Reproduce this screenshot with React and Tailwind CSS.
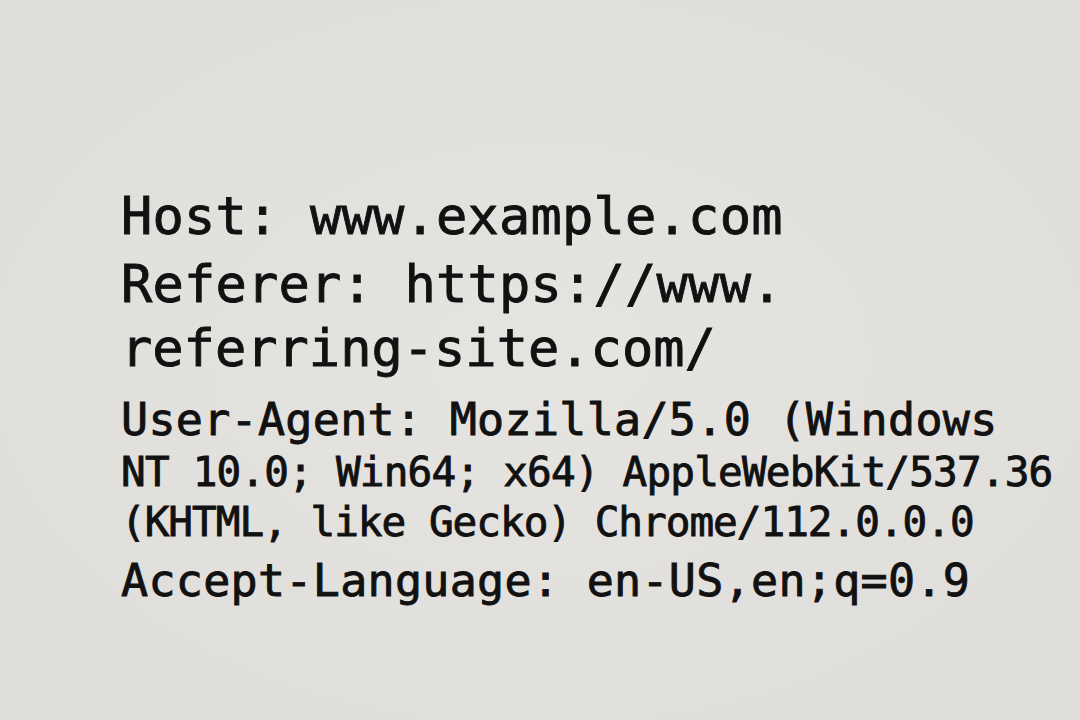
// HTTP request headers printed on paper
const LINES = [
  { text: 'Host: www.example.com', cls: 'text-[52px] tracking-[0.2px]' },
  { text: 'Referer: https://www.', cls: 'mt-[16px] text-[52px] tracking-[0.2px]' },
  { text: 'referring-site.com/', cls: 'mt-[12px] text-[52px]' },
  { text: 'User-Agent: Mozilla/5.0 (Windows', cls: 'mt-[23px] text-[45px] tracking-[0.3px]' },
  { text: 'NT 10.0; Win64; x64) AppleWebKit/537.36', cls: 'mt-[10px] text-[41px] tracking-[-0.8px]' },
  { text: '(KHTML, like Gecko) Chrome/112.0.0.0', cls: 'mt-[9px] text-[41px] tracking-[-1px]' },
  { text: 'Accept-Language: en-US,en;q=0.9', cls: 'mt-[15px] text-[45px] tracking-[0.3px]' },
]

export default function App() {
  return (
    <div className="h-[720px] w-full overflow-hidden bg-[#e3e1de] bg-[radial-gradient(ellipse_at_center,#e6e4e1_0%,#dfddda_100%)] font-['DejaVu_Sans_Mono',monospace] text-[#111111] [-webkit-text-stroke:0.9px_#111111]">
      <div className="flex flex-col pl-[121px] pt-[190px]">
        {LINES.map((line) => (
          <p key={line.text} className={`whitespace-pre leading-none ${line.cls}`}>
            {line.text}
          </p>
        ))}
      </div>
    </div>
  )
}
